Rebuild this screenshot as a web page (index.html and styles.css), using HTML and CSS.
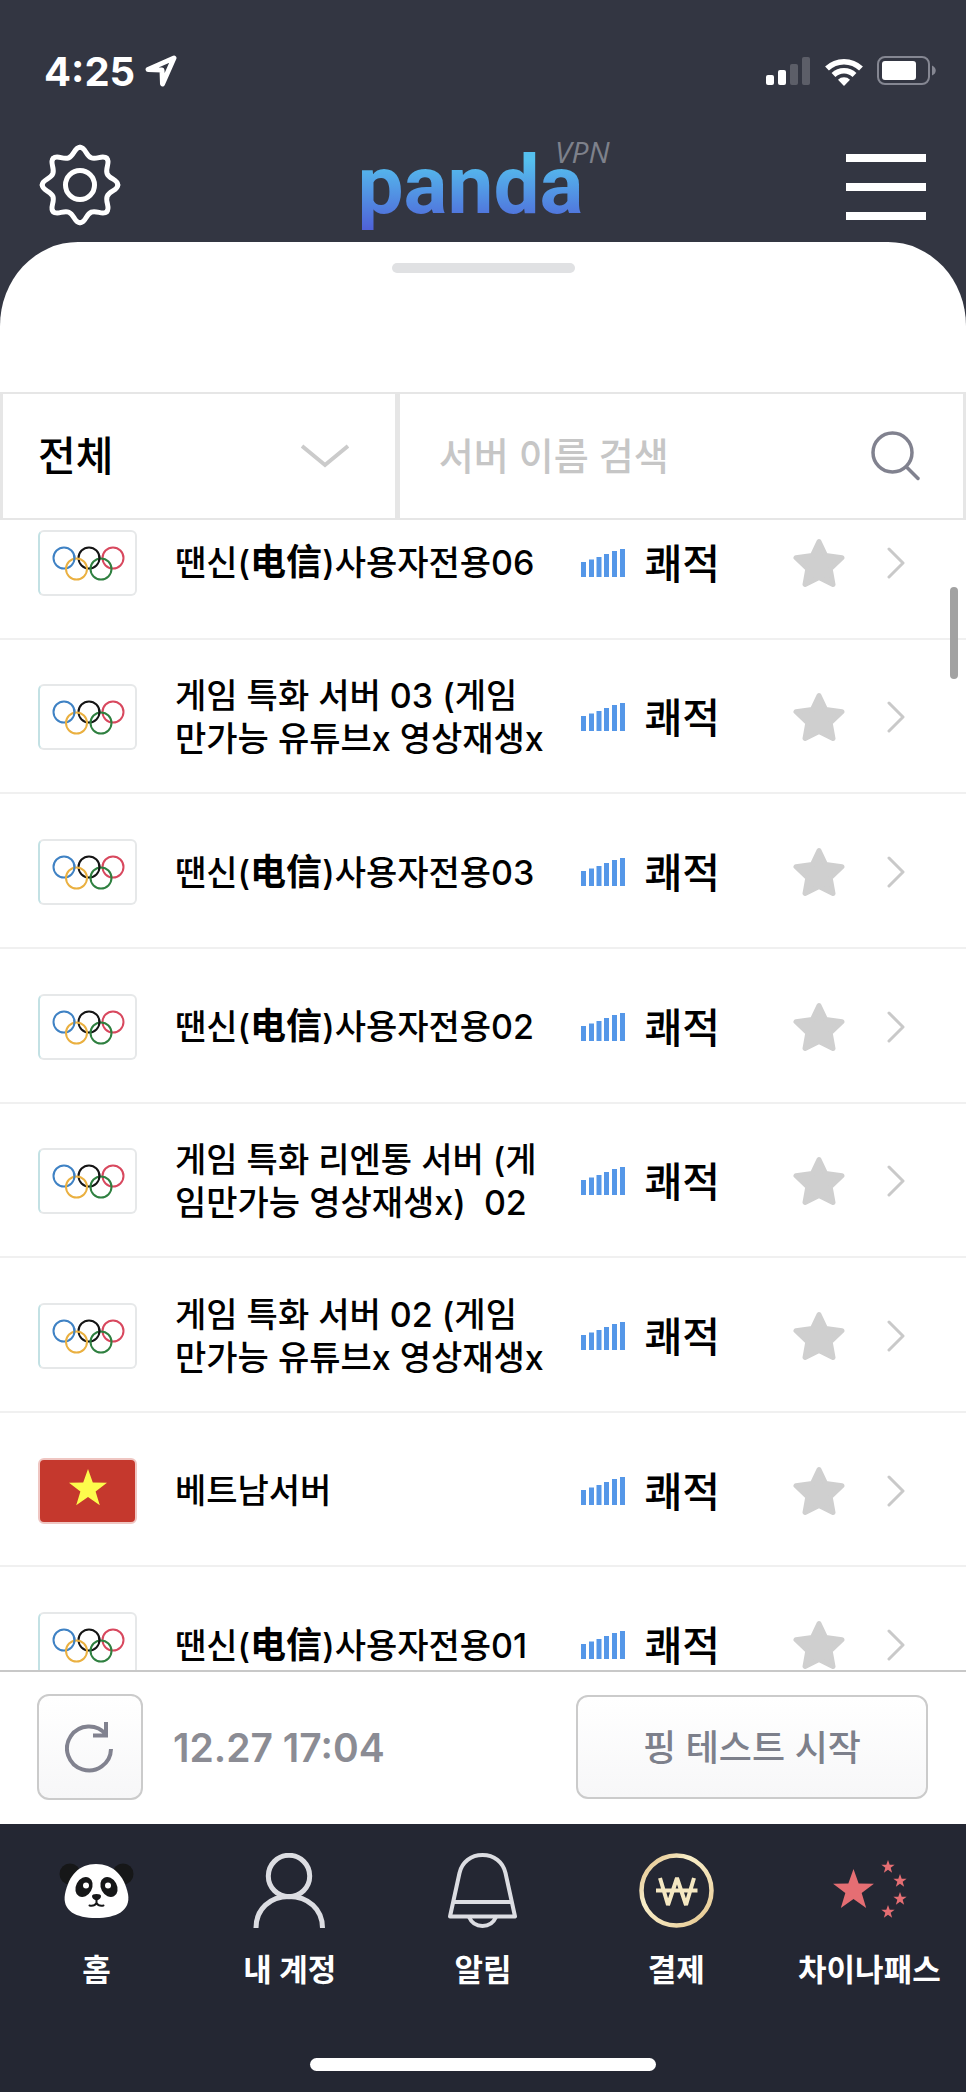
FILE: index.html
```html
<!DOCTYPE html>
<html lang="ko">
<head>
<meta charset="utf-8">
<meta name="viewport" content="width=device-width, initial-scale=1">
<title>panda VPN</title>
<link rel="stylesheet" href="styles.css">
</head>
<body>
<svg class="defs" aria-hidden="true">
  <symbol id="rings" viewBox="2 2 95 62"><g fill="none" stroke-width="2">
    <circle cx="26" cy="28" r="10.5" stroke="#3f82c4"/><circle cx="51" cy="28" r="10.5" stroke="#151515"/><circle cx="75" cy="28" r="10.5" stroke="#d8485e"/>
    <circle cx="38.500" cy="39" r="10.500" stroke="#eab040"/><circle cx="63" cy="39" r="10.500" stroke="#2f8040"/>
    <path d="M36.200 25.500A10.500 10.500 0 0 1 36 31" stroke="#3f82c4"/><path d="M61 25A10.500 10.500 0 0 1 61 31" stroke="#151515"/></g></symbol>
  <symbol id="bars" viewBox="0 0 44 30"><path fill="#5597e8" d="M0 14h5v15H0zM8 11.500h5V29H8zM15.500 9h5v20h-5zM23 6h5v23h-5zM31 3h5v26h-5zM39 1h5v28h-5z"/></symbol>
  <symbol id="star" viewBox="0 0 52 50"><path fill="#cfcfcf" stroke="#cfcfcf" stroke-width="5" stroke-linejoin="round" d="M26 3.500l6.600 14 16.400 2.300-11.800 11.100L40 46.500l-14-7-14 7 2.800-15.600L3 19.800l16.400-2.300z"/></symbol>
  <symbol id="chev" viewBox="0 0 18 32"><path fill="none" stroke="#c9c9c9" stroke-width="3" stroke-linecap="round" stroke-linejoin="round" d="M2 2l14 14L2 30"/></symbol>
  <symbol id="five" viewBox="-10 -10 20 20"><path d="M0-10L2.400-3.200 9.500-3.100 3.800 1.200 5.900 8.100 0 4 -5.900 8.100 -3.800 1.200 -9.500-3.100 -2.400-3.200z"/></symbol>
</svg>
<div class="app">
  <header class="top">
    <div class="status">
      <span class="time">4:25</span>
      <svg class="loc" viewBox="0 0 32 32"><path fill="none" stroke="#fff" stroke-width="5" stroke-linejoin="round" d="M3 14.500L29 3 17.500 29 17 15z"/></svg>
      <svg class="signal" viewBox="0 0 45 28"><g fill="#fff"><rect y="18" width="8" height="10" rx="2"/><rect x="12" y="13" width="8" height="15" rx="2"/><g opacity=".2"><rect x="24" y="7" width="8" height="21" rx="2"/><rect x="36" width="8" height="28" rx="2"/></g></g></svg>
      <svg class="wifi" viewBox="0 0 38 29"><path fill="none" stroke="#fff" stroke-width="5.500" d="M2 11.500a24.500 24.500 0 0 1 34 0M8.500 18a15 15 0 0 1 21 0"/><path fill="#fff" d="M19 29l-6-6.300a8.500 8.500 0 0 1 12 0z"/></svg>
      <svg class="battery" viewBox="0 0 60 30"><rect x="1" y="1" width="51" height="27" rx="7" fill="none" stroke="#858792" stroke-width="2"/><rect x="5" y="5" width="34" height="19" rx="3" fill="#fff"/><path fill="#858792" d="M55 9.500c5 2 5 8 0 10z"/></svg>
    </div>
    <div class="titlebar">
      <button class="icon-button" aria-label="설정"><svg class="gear" viewBox="-41 -41 82 82" fill="none" stroke="#fff" stroke-width="5" stroke-linecap="round"><g id="q"><path id="t" d="M0-37.800C5.600-37.800 5.700-29.500 11.200-27.200S22.700-30.700 26.700-26.700"/><use href="#t" transform="rotate(45)"/></g><use href="#q" transform="rotate(90)"/><use href="#q" transform="rotate(180)"/><use href="#q" transform="rotate(270)"/><circle r="14.500"/></svg></button>
      <h1 class="logo"><span class="word">panda</span><span class="vpn">VPN</span></h1>
      <button class="menu" aria-label="메뉴"><span></span><span></span><span></span></button>
    </div>
  </header>
  <main class="sheet">
    <div class="grip"><span></span></div>
    <form class="filters">
      <div class="region"><select aria-label="지역"><option>전체</option></select><svg viewBox="0 0 48 25"><path fill="none" stroke="#cbcbcb" stroke-width="4" d="M1 2l23 19L47 2"/></svg></div>
      <div class="search"><input type="text" aria-label="서버 이름 검색" placeholder="서버 이름 검색"><button class="find" type="button" aria-label="검색"><svg viewBox="0 0 50 50"><g fill="none" stroke="#81828f" stroke-width="3.500" stroke-linecap="round"><circle cx="21.500" cy="21.500" r="19.500"/><path d="M35.500 36L47 47.500"/></g></svg></button></div>
    </form>
    <div class="list">
      <ul>
        <li><svg class="flag"><use href="#rings"/></svg><span class="name">땐신(<span class="zh" lang="zh">电信</span>)사용자전용06</span><svg class="bars"><use href="#bars"/></svg><span class="state">쾌적</span><button aria-label="즐겨찾기"><svg class="star"><use href="#star"/></svg></button><svg class="chev"><use href="#chev"/></svg></li>
        <li><svg class="flag"><use href="#rings"/></svg><span class="name">게임 특화 서버 03 (게임<br>만가능 유튜브x 영상재생x</span><svg class="bars"><use href="#bars"/></svg><span class="state">쾌적</span><button aria-label="즐겨찾기"><svg class="star"><use href="#star"/></svg></button><svg class="chev"><use href="#chev"/></svg></li>
        <li><svg class="flag"><use href="#rings"/></svg><span class="name">땐신(<span class="zh" lang="zh">电信</span>)사용자전용03</span><svg class="bars"><use href="#bars"/></svg><span class="state">쾌적</span><button aria-label="즐겨찾기"><svg class="star"><use href="#star"/></svg></button><svg class="chev"><use href="#chev"/></svg></li>
        <li><svg class="flag"><use href="#rings"/></svg><span class="name">땐신(<span class="zh" lang="zh">电信</span>)사용자전용02</span><svg class="bars"><use href="#bars"/></svg><span class="state">쾌적</span><button aria-label="즐겨찾기"><svg class="star"><use href="#star"/></svg></button><svg class="chev"><use href="#chev"/></svg></li>
        <li><svg class="flag"><use href="#rings"/></svg><span class="name">게임 특화 리엔통 서버 (게<br>임만가능 영상재생x)&nbsp; 02</span><svg class="bars"><use href="#bars"/></svg><span class="state">쾌적</span><button aria-label="즐겨찾기"><svg class="star"><use href="#star"/></svg></button><svg class="chev"><use href="#chev"/></svg></li>
        <li><svg class="flag"><use href="#rings"/></svg><span class="name">게임 특화 서버 02 (게임<br>만가능 유튜브x 영상재생x</span><svg class="bars"><use href="#bars"/></svg><span class="state">쾌적</span><button aria-label="즐겨찾기"><svg class="star"><use href="#star"/></svg></button><svg class="chev"><use href="#chev"/></svg></li>
        <li><svg class="flag vietnam" viewBox="2 2 95 62"><use href="#five" x="30" y="11" width="40" height="40" fill="#fdfb4c"/></svg><span class="name">베트남서버</span><svg class="bars"><use href="#bars"/></svg><span class="state">쾌적</span><button aria-label="즐겨찾기"><svg class="star"><use href="#star"/></svg></button><svg class="chev"><use href="#chev"/></svg></li>
        <li><svg class="flag"><use href="#rings"/></svg><span class="name">땐신(<span class="zh" lang="zh">电信</span>)사용자전용01</span><svg class="bars"><use href="#bars"/></svg><span class="state">쾌적</span><button aria-label="즐겨찾기"><svg class="star"><use href="#star"/></svg></button><svg class="chev"><use href="#chev"/></svg></li>
      </ul>
      <span class="thumb"></span>
    </div>
    <div class="actions">
      <button class="refresh" aria-label="새로고침"><svg viewBox="0 0 50 52"><path fill="none" stroke="#81828f" stroke-width="4" d="M46 28A22 22 0 1 1 41 13.500M41 1v13.500H28"/></svg></button>
      <time>12.27 17:04</time>
      <button class="ping">핑 테스트 시작</button>
    </div>
  </main>
  <nav class="tabs">
    <a href="#home"><svg viewBox="0 0 75 75"><circle cx="11" cy="21" r="10.500" fill="#161718"/><circle cx="64" cy="21" r="10.500" fill="#161718"/><path fill="#fff" d="M37 11c17 0 28 11 32 30 3 17-12 24-32 24S3 58 6 41c4-19 14-30 31-30z"/><ellipse cx="25" cy="34" rx="8" ry="10.500" transform="rotate(28 25 34)" fill="#161718"/><ellipse cx="50" cy="34" rx="8" ry="10.500" transform="rotate(-28 50 34)" fill="#161718"/><circle cx="27" cy="32.500" r="3" fill="#fff"/><circle cx="49" cy="32.500" r="3" fill="#fff"/><path fill="#161718" d="M33 43q0-2 4.500-2t4.500 2q0 3-4.500 4.500Q33 46 33 43z"/><path fill="none" stroke="#161718" stroke-width="2" stroke-linecap="round" d="M37.500 46v4q-2 3.500-7 2.500M37.500 50q2 3.500 7 2.500"/></svg>홈</a>
    <a href="#account"><svg viewBox="0 0 75 75"><g fill="none" stroke="#dcdde2" stroke-width="5"><circle cx="37" cy="23" r="20.700"/><path d="M4 75C4 56 18 43.500 37 43.500S70.500 56 70.500 75"/></g></svg>내 계정</a>
    <a href="#alerts"><svg viewBox="0 0 75 75"><g fill="none" stroke="#dcdde2" stroke-width="4"><path stroke-linejoin="round" d="M5 63.500L14.500 20C17 9 26 2 37.500 2S58 9 60.500 20L70 63.500zM9 49h57"/><path d="M24 64q4 9 13.500 9T51 64"/></g></svg>알림</a>
    <a href="#pay"><svg viewBox="0 0 75 75"><defs><linearGradient id="gold" x1="0" y1="0" x2="1" y2="1"><stop stop-color="#e0bd84"/><stop offset=".35" stop-color="#f7edc8"/><stop offset=".7" stop-color="#f1ddb0"/><stop offset="1" stop-color="#e3c389"/></linearGradient></defs><circle cx="37.500" cy="37.500" r="35" fill="none" stroke="url(#gold)" stroke-width="4.500"/><path fill="none" stroke="#f5e8c2" stroke-width="4" stroke-linejoin="bevel" d="M21 25l8 27 9-27 9 27 8-27M17 37.500h41.500"/></svg>결제</a>
    <a href="#pass"><svg viewBox="0 0 75 75" fill="#e56e73"><use href="#five" y="16" width="43" height="43"/><use href="#five" x="49" y="7" width="14" height="14"/><use href="#five" x="61" y="21" width="14" height="14"/><use href="#five" x="61" y="39" width="14" height="14"/><use href="#five" x="49" y="52" width="14" height="14"/></svg>차이나패스</a>
    <span class="home-bar"></span>
  </nav>
</div>
</body>
</html>
```
FILE: styles.css
```css
* { box-sizing: border-box; }
body { margin: 0; background: #333642; font-family: Inter, "Noto Sans CJK KR", sans-serif; font-weight: 500; color: #000; }
button, input, select { font: inherit; color: inherit; padding: 0; margin: 0; border: 0; background: none; border-radius: 0; }
svg { display: block; flex: none; }
.defs { position: absolute; width: 0; height: 0; }
.app { display: flex; flex-direction: column; height: 100vh; }

.top { flex: none; }
.status { display: flex; align-items: center; height: 142px; padding: 0 29px 0 44px; color: #fff; }
.time { font-size: 40px; font-weight: 700; }
.loc { width: 32px; height: 32px; margin: 0 auto 0 10px; }
.signal { width: 45px; height: 28px; margin-right: 14px; }
.wifi { width: 38px; height: 29px; margin-right: 14px; }
.battery { width: 60px; height: 30px; }
.titlebar { display: flex; align-items: center; justify-content: space-between; height: 100px; padding: 0 40px 14px 39px; }
.gear { width: 82px; height: 82px; }
.logo { position: relative; display: flex; margin: 0; padding-right: 26px; font-family: Roboto, sans-serif; }
.word { font-size: 82px; line-height: 98px; font-weight: 700; background: linear-gradient(#55c0ee 25%, #4f62d8 95%); background-clip: text; -webkit-background-clip: text; color: transparent; }
.vpn { position: absolute; right: 0; top: 0; font: italic 400 30px/32px "Open Sans", sans-serif; color: #7e818b; }
.menu { display: grid; gap: 21px; width: 80px; padding-top: 3px; }
.menu span { height: 8px; background: #fff; }

.sheet { display: flex; flex-direction: column; flex: 1; min-height: 0; background: #fff; border-radius: 78px 78px 0 0 / 84px 84px 0 0; }
.grip { height: 150px; padding-top: 21px; }
.grip span { display: block; width: 183px; height: 10px; margin: 0 auto; border-radius: 5px; background: #e0e1e3; }
.filters { display: grid; grid-template-columns: minmax(0, 7fr) minmax(0, 10fr); height: 128px; flex: none; }
.region, .search { display: flex; align-items: center; border: 3px solid #e6e6e6; border-width: 2px 3px; }
.search { border-left-width: 2px; padding: 0 42px 0 39px; }
.region { padding: 0 46px 0 35px; }
.region select { flex: 1; min-width: 0; height: 100%; appearance: none; font-size: 41px; outline: 0; }
.region svg { width: 48px; height: 25px; }
.search input { flex: 1; min-width: 0; height: 100%; font-size: 38px; outline: 0; }
.search input::placeholder { color: #c6c6c6; opacity: 1; }
.find svg { width: 50px; height: 50px; }

.list { position: relative; flex: 1; min-height: 0; overflow: hidden; }
.list ul { display: flex; flex-direction: column; height: 1237px; margin: -35px 0 0; padding: 0; list-style: none; }
.list li { display: flex; align-items: center; flex: 1; padding: 3px 61px 0 38px; border-bottom: 2px solid #f0f0f0; }
.flag { width: 99px; height: 66px; margin-right: 38px; border: 2px solid #e6e8e9; border-left-color: #c3e1e4; border-radius: 6px; }
.vietnam { background: #c5382d; border-color: #efc6c2; }
.name { flex: 1; font-size: 34px; line-height: 43px; white-space: nowrap; }
.zh { font-size: 36px; font-weight: 700; }
.bars { width: 44px; height: 30px; margin-right: 20px; }
.state { font-size: 41px; margin-right: 73px; padding-bottom: 4px; }
.star { width: 52px; height: 50px; }
.chev { width: 18px; height: 32px; margin-left: 42px; }
.thumb { position: absolute; right: 8px; top: 67px; width: 8px; height: 92px; border-radius: 4px; background: #a2a2a2; }

.actions { display: flex; align-items: center; flex: none; height: 154px; padding: 0 38px 2px 37px; border-top: 2px solid #c8c8c8; }
.refresh, .ping { border: 2px solid #cbcbcb; border-radius: 12px; background: linear-gradient(#fff, #f7f7f8); }
.refresh { display: grid; place-items: center; width: 106px; height: 106px; }
.refresh svg { width: 50px; height: 52px; }
.actions time { margin: 0 auto 0 30px; font-size: 39px; font-weight: 600; color: #8b8c94; }
.ping { width: 352px; height: 104px; padding-bottom: 4px; font-size: 36px; color: #7d808b; }

.tabs { position: relative; display: grid; grid-template-columns: repeat(5, 1fr); flex: none; height: 268px; padding-top: 29px; background: #242733; }
.tabs a { display: flex; flex-direction: column; align-items: center; gap: 20px; font-size: 31px; font-weight: 700; line-height: 44px; color: #fff; text-decoration: none; white-space: nowrap; }
.tabs svg { width: 75px; height: 75px; }
.home-bar { position: absolute; left: 50%; bottom: 21px; width: 346px; height: 13px; margin-left: -173px; border-radius: 7px; background: #fff; }
```
